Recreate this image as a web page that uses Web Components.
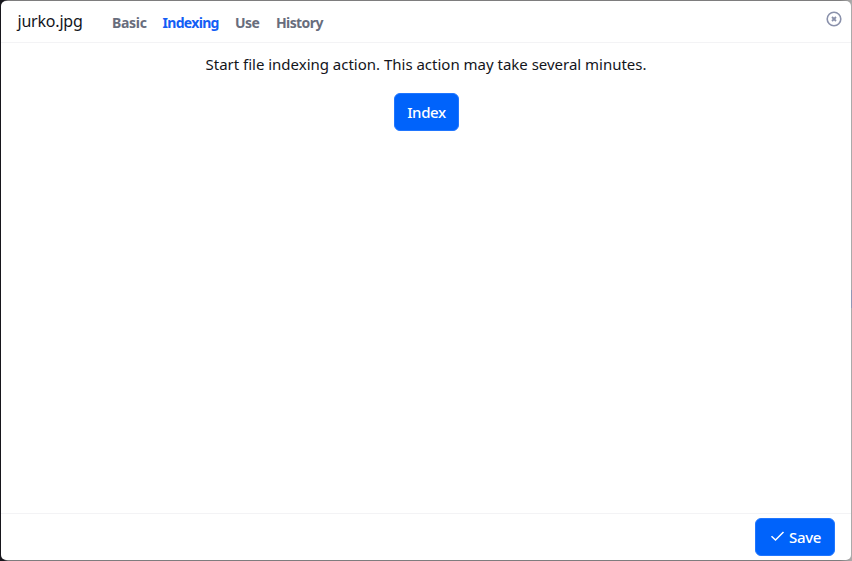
<!DOCTYPE html>
<html lang="en">
<head>
<meta charset="utf-8">
<title>jurko.jpg</title>
<style>
html, body { margin: 0; height: 100%; }
body { background: linear-gradient(#8f98b5, #8f98b5) 100% 290px / 1px 18px no-repeat, linear-gradient(90deg, #17161c 0 4px, #7e7d7e 8px 840px, #aaa 851px); font-family: "Noto Sans", sans-serif; color: #13151b; overflow: hidden; }
</style>
</head>
<body>
<file-dialog>
  <dialog-header slot="header" name="jurko.jpg">
    <tab-item style="--w:34.5px;--ls:-.3px">Basic</tab-item>
    <tab-item active style="--w:56.5px;--ls:-.68px">Indexing</tab-item>
    <tab-item style="--w:25px;--ls:-.5px">Use</tab-item>
    <tab-item style="--w:48px;--ls:-.6px">History</tab-item>
  </dialog-header>
  <index-panel>Start file indexing action. This action may take several minutes.</index-panel>
  <dialog-footer slot="footer">
    <action-button style="--w:80px;--pt:0px"><check-icon slot="icon"></check-icon>Save</action-button>
  </dialog-footer>
</file-dialog>
<script>
const define = (name, markup, setup) => customElements.define(name, class extends HTMLElement {
  constructor() {
    super();
    this.attachShadow({ mode: 'open' }).innerHTML = markup;
  }
  connectedCallback() { if (setup) setup(this); }
});

define('file-dialog', `<style>
  :host { display: block; box-sizing: border-box; height: 100vh; padding: 1px; }
  section { display: flex; flex-direction: column; height: 100%; background: #fff; border-radius: 5px; overflow: hidden; }
  main { flex: 1; }
</style><section><slot name="header"></slot><main><slot></slot></main><slot name="footer"></slot></section>`);

define('dialog-header', `<style>
  :host { display: flex; box-sizing: border-box; height: 42px; border-bottom: 1px solid #f3f3f5; padding: 0 9px 0 16.5px; }
  .name { width: 94.5px; font-size: 16px; line-height: 40px; letter-spacing: -.2px; white-space: nowrap; }
  nav { display: flex; gap: 16px; flex: 1; }
  .close { width: 16px; height: 16px; margin-top: 10px; display: block; }
</style><div class="name"></div><nav><slot></slot></nav>
<svg class="close" viewBox="0 0 16 16" fill="none" stroke="#8a91ab"><circle cx="8" cy="8" r="6.8" stroke-width="1.6"/><path d="M6 6l4 4M10 6l-4 4" stroke-width="1.8"/></svg>`,
  el => { el.shadowRoot.querySelector('.name').textContent = el.getAttribute('name'); });

define('tab-item', `<style>
  :host { display: block; width: var(--w); font-size: 14px; font-weight: 700; line-height: 43px; letter-spacing: var(--ls); color: #686d7c; white-space: nowrap; }
  :host([active]) { color: #135ef5; }
</style><slot></slot>`);

define('index-panel', `<style>
  :host { display: flex; flex-direction: column; align-items: center; padding-top: 9px; font-size: 15px; line-height: 24px; }
  p { margin: 0 0 17px; white-space: nowrap; letter-spacing: -.01px; }
</style><p><slot></slot></p><action-button style="--w:65px">Index</action-button>`);

define('dialog-footer', `<style>
  :host { display: flex; justify-content: flex-end; align-items: center; box-sizing: border-box; height: 47px; padding: 0 16px 0 0; border-top: 1px solid #f3f3f5; }
</style><slot></slot>`);

define('action-button', `<style>
  :host { display: block; }
  button { display: flex; align-items: center; justify-content: center; gap: 4px; box-sizing: border-box; width: var(--w); height: 38px; padding: 0 0 1px 1px; border: 1px solid #2076ff; border-radius: 6px; background: #0063fb; color: #fff; font: 500 15px/36px "Noto Sans", sans-serif; letter-spacing: -.35px; }
</style><button><slot name="icon"></slot><span><slot></slot></span></button>`);

define('check-icon', `<style>
  :host { display: block; width: 15px; height: 16px; }
  svg { display: block; }
</style><svg width="15" height="14" viewBox="0 0 15 14" fill="none" stroke="#fff" stroke-width="1.5"><path d="M1.5 7.2l4 3.8 8-8"/></svg>`);
</script>
</body>
</html>
